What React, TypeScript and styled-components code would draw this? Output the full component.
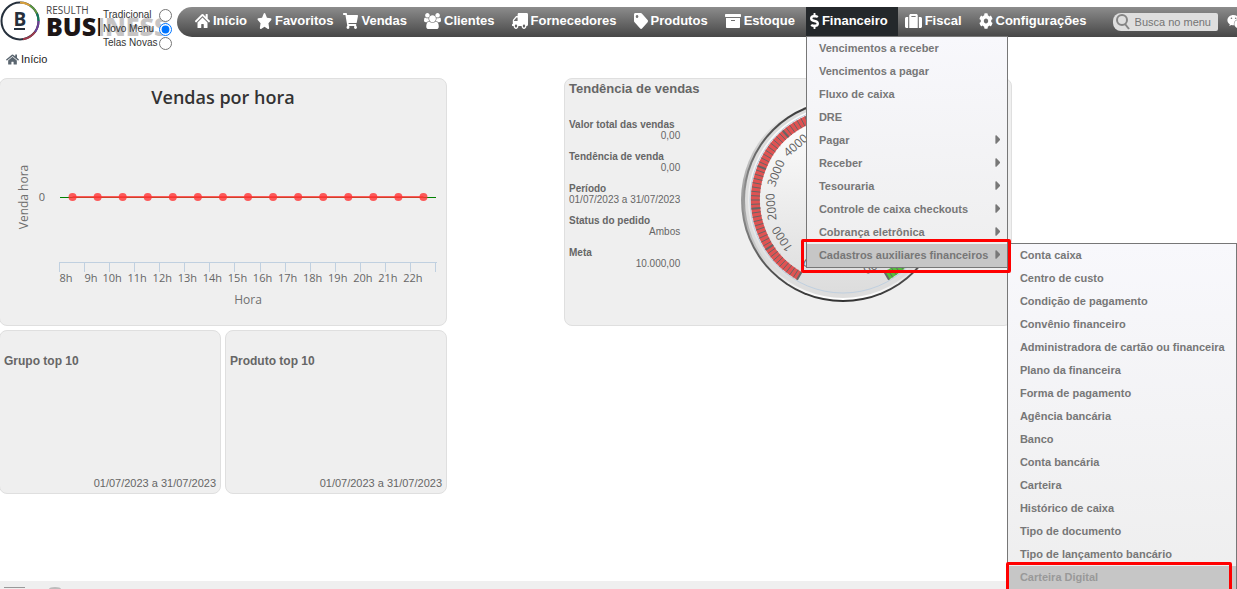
import React from 'react';
import styled, { createGlobalStyle, css } from 'styled-components';
import {
  FaHome, FaStar, FaShoppingCart, FaTruck, FaTag, FaArchive,
  FaDollarSign, FaSuitcase, FaCog, FaWeixin, FaCaretRight,
} from 'react-icons/fa';

const GlobalStyle = createGlobalStyle`
  * { box-sizing: border-box; }
  html, body, #root { height: 100%; }
  body {
    margin: 0;
    overflow: hidden;
    background: #fff;
    color: #666;
    font: 11px/16px "Liberation Sans", Arial, sans-serif;
  }
  a { color: inherit; text-decoration: none; }
  ul { list-style: none; margin: 0; padding: 0; }
  h1, h2, p, dl, dd { margin: 0; }
  svg { display: block; }
`;

const Page = styled.div`
  height: 100%;
  display: flex;
  flex-direction: column;
`;

const Header = styled.header`
  display: flex;
  height: 50px;
`;

const Brand = styled.div`
  position: relative;
  flex: 0 0 177px;
  display: flex;
  gap: 6px;
`;

const BrandMark = styled.svg`
  width: 40px;
  height: 42px;
  flex: none;
`;

const BrandName = styled.div`
  color: #1d1616;
  padding-top: 4px;
`;

const BrandTop = styled.div`
  font: 400 10px/12px "Open Sans", sans-serif;
  color: #444;
`;

const BrandBottom = styled.div`
  font: 800 25px/20px "Open Sans", sans-serif;
`;

const ModePicker = styled.form`
  position: absolute;
  top: 8px;
  left: 100px;
  right: 5px;
  padding-left: 3px;
  background: rgba(255, 255, 255, 0.75);
`;

const Mode = styled.label`
  display: flex;
  justify-content: space-between;
  align-items: center;
  height: 14px;
  font-size: 10px;
  color: #333;
  white-space: nowrap;
  input { margin: 0; width: 13px; height: 13px; }
`;

const Nav = styled.nav`
  flex: 1;
  min-width: 0;
  display: flex;
  height: 30px;
  margin-top: 7px;
  padding-left: 18px;
  border-radius: 20px 0 0 20px;
  background: linear-gradient(#8c8c8c, #474747);
`;

const NavList = styled.ul`
  display: flex;
`;

const NavItem = styled.li<{ $tight?: boolean; $open?: boolean }>`
  position: relative;
  padding-left: ${p => (p.$tight ? 0 : 7)}px;
  padding-right: 10px;
  ${p => p.$open && css`
    margin-left: 1px;
    padding-left: 4px;
    background: #24282b;
  `}
`;

const NavLink = styled.a`
  display: flex;
  align-items: center;
  gap: 3px;
  height: 28px;
  color: #fff;
  font-size: 13px;
  font-weight: bold;
  white-space: nowrap;
`;

const NavIcon = styled.span<{ $width: number; $flip?: boolean }>`
  display: flex;
  justify-content: center;
  width: ${p => p.$width}px;
  svg { width: 100%; height: 16px; flex: none; transform: ${p => (p.$flip ? 'scaleX(-1)' : 'none')}; }
`;

const Search = styled.label`
  display: flex;
  align-items: center;
  gap: 5px;
  width: 105px;
  height: 18px;
  margin: 6px 9px 0 16px;
  padding-left: 2px;
  border-radius: 8px 2px 2px 8px;
  background: #dedede;
  flex: none;
  svg { flex: none; }
  input {
    width: 80px;
    padding: 0;
    border: 0;
    background: none;
    font: 11px "Liberation Sans", Arial, sans-serif;
    outline: 0;
  }
  input::placeholder { color: #757575; opacity: 1; }
`;

const ChatLink = styled.a`
  flex: 1;
  min-width: 0;
  overflow: hidden;
  padding-top: 6px;
  color: #fff;
`;

const Menu = styled.ul<{ $sub?: boolean }>`
  position: absolute;
  z-index: 2;
  top: ${p => (p.$sub ? -1 : 29)}px;
  left: ${p => (p.$sub ? '100%' : '0')};
  width: ${p => (p.$sub ? 230 : 202)}px;
  border: 1px solid #777;
  background: linear-gradient(#f8f8fc, #eee);
`;

const MenuItem = styled.li<{ $active?: boolean; $muted?: boolean }>`
  position: relative;
  color: ${p => (p.$muted ? '#999' : '#777')};
  background: ${p => (p.$active ? '#c6c6c6' : 'none')};
`;

const MenuLink = styled.a`
  display: flex;
  align-items: center;
  justify-content: space-between;
  height: 23px;
  padding: 0 7px 2px 12px;
  font-size: 11px;
  font-weight: bold;
  white-space: nowrap;
  svg { width: 5px; height: 15px; flex: none; }
`;

const Marker = styled.div<{ $sub?: boolean }>`
  position: absolute;
  z-index: 3;
  inset: ${p => (p.$sub ? '-4px 4px -8px -2px' : '-5px -4px -6px -6px')};
  border: 3px solid #f00;
  border-radius: 2px;
  pointer-events: none;
`;

const Breadcrumb = styled.nav`
  display: flex;
  height: 28px;
  padding: 1px 0 0 6px;
  color: #222;
  a { display: flex; gap: 2px; height: 16px; align-items: center; }
  svg { color: #5b6670; }
`;

const Main = styled.main`
  flex: 1;
  display: grid;
  grid-template-columns: 448px 448px;
  column-gap: 117px;
  align-content: start;
  margin-left: -1px;
`;

const Column = styled.div`
  display: grid;
  grid-template-columns: 1fr 1fr;
  gap: 4px;
`;

const Card = styled.section<{ $wide?: boolean }>`
  border: 1px solid #dfdfdf;
  border-radius: 8px;
  background: #efefef;
  min-height: ${p => (p.$wide ? 248 : 164)}px;
  ${p => p.$wide && css`grid-column: 1 / -1;`}
`;

const TopCard = styled(Card)`
  display: flex;
  flex-direction: column;
  justify-content: space-between;
  padding: 22px 4px 2px;
`;

const TopTitle = styled.h2`
  font-size: 12px;
  line-height: 16px;
`;

const TopPeriod = styled.p`
  text-align: right;
`;

const TrendCard = styled(Card)`
  display: flex;
`;

const TrendFigures = styled.div`
  flex: 0 0 175px;
  padding: 2px 0 0 4px;
`;

const TrendTitle = styled.h2`
  font-size: 13px;
  line-height: 16px;
  white-space: nowrap;
  margin-bottom: 22px;
`;

const FigureList = styled.dl`
  width: 107px;
  display: grid;
  gap: 10px;
  font-size: 10px;
  line-height: 11px;
  white-space: nowrap;
  dt { font-weight: bold; }
  dd { display: flex; justify-content: flex-end; }
`;

const Footer = styled.footer`
  height: 8px;
  flex: none;
  display: flex;
  align-items: flex-end;
  background: #efefef;
`;

function UsersIcon(props: React.SVGProps<SVGSVGElement>) {
  return (
    <svg viewBox="0 0 1920 1792" fill="currentColor" {...props}>
      <path d="M593 896q-162 5-265 128h-134q-82 0-138-40.500t-56-118.500q0-353 124-353 6 0 43.500 21t97.500 42.500 119 21.500q67 0 133-23-5 37-5 66 0 139 81 256zm1071 637q0 120-73 189.500t-194 69.500h-874q-121 0-194-69.500t-73-189.500q0-53 3.500-103.500t14-109 26.500-108.500 43-97.500 62-81 85.500-53.500 111.500-20q10 0 43 21.500t73 48 107 48 135 21.500 135-21.500 107-48 73-48 43-21.500q61 0 111.500 20t85.500 53.500 62 81 43 97.500 26.500 108.500 14 109 3.500 103.500zm-1024-1277q0 106-75 181t-181 75-181-75-75-181 75-181 181-75 181 75 75 181zm704 384q0 159-112.500 271.500t-271.500 112.500-271.500-112.500-112.500-271.500 112.500-271.500 271.500-112.500 271.500 112.500 112.500 271.500zm576 225q0 78-56 118.500t-138 40.500h-134q-103-123-265-128 81-117 81-256 0-29-5-66 66 23 133 23 59 0 119-21.500t97.500-42.500 43.500-21q124 0 124 353zm-128-609q0 106-75 181t-181 75-181-75-75-181 75-181 181-75 181 75 75 181z" />
    </svg>
  );
}

interface NavEntry {
  label: string;
  icon: React.ComponentType<{ preserveAspectRatio?: string }>;
  width: number;
  tight?: boolean;
  flip?: boolean;
}

const navEntries: NavEntry[] = [
  { label: 'Início', icon: FaHome, width: 15, tight: true },
  { label: 'Favoritos', icon: FaStar, width: 15, tight: true },
  { label: 'Vendas', icon: FaShoppingCart, width: 15, tight: true },
  { label: 'Clientes', icon: UsersIcon, width: 17 },
  { label: 'Fornecedores', icon: FaTruck, width: 16, flip: true },
  { label: 'Produtos', icon: FaTag, width: 14 },
  { label: 'Estoque', icon: FaArchive, width: 16 },
  { label: 'Financeiro', icon: FaDollarSign, width: 9 },
  { label: 'Fiscal', icon: FaSuitcase, width: 17 },
  { label: 'Configurações', icon: FaCog, width: 14 },
];

const financeMenu = [
  { label: 'Vencimentos a receber' },
  { label: 'Vencimentos a pagar' },
  { label: 'Fluxo de caixa' },
  { label: 'DRE' },
  { label: 'Pagar', nested: true },
  { label: 'Receber', nested: true },
  { label: 'Tesouraria', nested: true },
  { label: 'Controle de caixa checkouts', nested: true },
  { label: 'Cobrança eletrônica', nested: true },
  { label: 'Cadastros auxiliares financeiros', nested: true, open: true },
];

const auxiliaryMenu = [
  'Conta caixa', 'Centro de custo', 'Condição de pagamento', 'Convênio financeiro',
  'Administradora de cartão ou financeira', 'Plano da financeira', 'Forma de pagamento',
  'Agência bancária', 'Banco', 'Conta bancária', 'Carteira', 'Histórico de caixa',
  'Tipo de documento', 'Tipo de lançamento bancário', 'Carteira Digital',
];

const figures = [
  ['Valor total das vendas', '0,00'],
  ['Tendência de venda', '0,00'],
  ['Período', '01/07/2023 a 31/07/2023'],
  ['Status do pedido', 'Ambos'],
  ['Meta', '10.000,00'],
];

const period = '01/07/2023 a 31/07/2023';

function AuxiliaryMenu() {
  return (
    <Menu $sub>
      {auxiliaryMenu.map(label => {
        const last = label === 'Carteira Digital';
        return (
          <MenuItem key={label} $active={last} $muted={last}>
            <MenuLink href="#">{label}</MenuLink>
            {last && <Marker $sub />}
          </MenuItem>
        );
      })}
    </Menu>
  );
}

function FinanceMenu() {
  return (
    <Menu>
      {financeMenu.map(item => (
        <MenuItem key={item.label} $active={item.open}>
          <MenuLink href="#">
            {item.label}
            {item.nested && <FaCaretRight viewBox="0 0 144 512" />}
          </MenuLink>
          {item.open && <AuxiliaryMenu />}
          {item.open && <Marker />}
        </MenuItem>
      ))}
    </Menu>
  );
}

function Logo() {
  return (
    <BrandMark viewBox="0 0 40 42" aria-hidden="true">
      <g fill="none" strokeWidth="2">
        <circle cx="20" cy="21" r="18.5" stroke="#26303c" />
        <path d="M20 2.5a18.5 18.5 0 0 1 10 3" stroke="#d9a13b" />
        <path d="M30 5.5a18.5 18.5 0 0 1 7 8" stroke="#5f9d3f" />
        <path d="M37 13.5a18.5 18.5 0 0 1 1.5 7.5" stroke="#127a5c" />
        <path d="M38.5 21a18.5 18.5 0 0 1-3.5 11" stroke="#6b3f96" />
        <path d="M35 32a18.5 18.5 0 0 1-12 7.3" stroke="#a03a4c" />
      </g>
      <text x="20" y="26" textAnchor="middle" fontFamily="Open Sans" fontWeight="700" fontSize="19" fill="#26303c">B</text>
      <rect x="14" y="28" width="11" height="2" fill="#26303c" />
    </BrandMark>
  );
}

const hours = Array.from({ length: 15 }, (_, i) => i + 8);
const chartFont = '"Open Sans", sans-serif';

function HourlyChart() {
  const left = 60;
  const right = 436;
  const step = (right - left) / hours.length;
  return (
    <svg width="446" height="246" viewBox="0 0 446 246" role="img" aria-label="Vendas por hora" fontFamily={chartFont}>
      <text x="223" y="25" textAnchor="middle" fontSize="18" fontWeight="600" fill="#333">Vendas por hora</text>
      <text x="28" y="118" textAnchor="middle" fontSize="12" fill="#707070" transform="rotate(-90 28 118)">Venda hora</text>
      <text x="45" y="122" textAnchor="end" fontSize="11" fill="#666">0</text>
      <path d={`M${left} 118.5H${right}`} stroke="#008000" />
      <path d={`M${left + step / 2} 118H${right - step / 2}`} stroke="#f33" strokeOpacity=".8" strokeWidth="2" />
      <path
        d={`M${left - 1} 183.5H${right + 1}` + Array.from({ length: 16 }, (_, i) => `M${Math.round(left + i * step) - 0.5} 183v10`).join('')}
        stroke="#c0d0e0"
        fill="none"
      />
      {hours.map((hour, i) => (
        <g key={hour}>
          <circle cx={left + step * (i + 0.5)} cy="118" r="4" fill="#f33" fillOpacity=".8" />
          <text x={left + step * i + (i < 2 ? 6 : 2)} y="203" textAnchor="middle" fontSize="11" fill="#666">{hour}h</text>
        </g>
      ))}
      <text x="248" y="225" textAnchor="middle" fontSize="12" fill="#707070">Hora</text>
    </svg>
  );
}

const polar = (deg: number, r: number) => {
  const a = (deg * Math.PI) / 180;
  return `${(Math.sin(a) * r).toFixed(2)} ${(-Math.cos(a) * r).toFixed(2)}`;
};

const band = (from: number, to: number) =>
  `M${polar(from, 87.5)}A87.5 87.5 0 ${to - from > 180 ? 1 : 0} 1 ${polar(to, 87.5)}`;

function Gauge() {
  const perThousand = 300 / 11;
  const angle = (thousands: number) => -150 + thousands * perThousand;
  const ticks = Array.from({ length: 111 }, (_, i) => i);
  return (
    <svg width="206" height="246" viewBox="-103 -121 206 246" role="img" aria-label="Tendência de vendas" fontFamily={chartFont}>
      <defs>
        <linearGradient id="rimOuter" x1="0" y1="0" x2="0" y2="1">
          <stop offset="0" stopColor="#fff" />
          <stop offset="1" stopColor="#333" />
        </linearGradient>
        <linearGradient id="rimInner" x1="0" y1="0" x2="0" y2="1">
          <stop offset="0" stopColor="#333" />
          <stop offset="1" stopColor="#fff" />
        </linearGradient>
        <linearGradient id="face" x1="0" y1="0" x2="0" y2="1">
          <stop offset="0" stopColor="#fff" />
          <stop offset="1" stopColor="#dcdcdc" />
        </linearGradient>
      </defs>
      <circle r="102" fill="url(#rimOuter)" />
      <circle r="100" fill="url(#rimInner)" />
      <circle r="98" fill="#ddd" />
      <circle r="95" fill="url(#face)" />
      <circle r="93" fill="none" stroke="#c0d0e0" />
      <g fill="none" strokeWidth="9">
        <path d={band(angle(0), angle(6))} stroke="#df5353" />
        <path d={band(angle(6), angle(9))} stroke="#dddf0d" />
        <path d={band(angle(9), angle(11))} stroke="#55bf3b" />
      </g>
      {ticks.map(i => (
        <path
          key={i}
          d={`M${polar(angle(i / 10), 92)}L${polar(angle(i / 10), 83)}`}
          stroke="#666"
          strokeWidth={i % 10 === 0 ? 2 : 1}
        />
      ))}
      {Array.from({ length: 12 }, (_, i) => (
        <text key={i} y="-68" textAnchor="middle" fontSize="12" fill="#606060" transform={`rotate(${angle(i)})`}>
          {i * 1000}
        </text>
      ))}
    </svg>
  );
}

export default function App() {
  return (
    <Page>
      <GlobalStyle />
      <Header>
        <Brand>
          <Logo />
          <BrandName>
            <BrandTop>RESULTH</BrandTop>
            <BrandBottom>BUSINESS</BrandBottom>
          </BrandName>
          <ModePicker>
            <Mode>Tradicional<input type="radio" name="mode" /></Mode>
            <Mode>Novo Menu<input type="radio" name="mode" defaultChecked /></Mode>
            <Mode>Telas Novas<input type="radio" name="mode" /></Mode>
          </ModePicker>
        </Brand>
        <Nav>
          <NavList>
            {navEntries.map(({ label, icon: Icon, width, tight, flip }) => {
              const open = label === 'Financeiro';
              return (
                <NavItem key={label} $tight={tight} $open={open}>
                  <NavLink href="#">
                    <NavIcon $width={width} $flip={flip}><Icon preserveAspectRatio="none" /></NavIcon>
                    {label}
                  </NavLink>
                  {open && <FinanceMenu />}
                </NavItem>
              );
            })}
          </NavList>
          <Search>
            <svg width="15" height="16" viewBox="0 0 15 16" fill="none" stroke="#858585" strokeWidth="2">
              <circle cx="7" cy="6" r="5" />
              <path d="M10 10l4 5" />
            </svg>
            <input type="text" placeholder="Busca no menu" aria-label="Busca no menu" />
          </Search>
          <ChatLink href="#" aria-label="Chat"><FaWeixin size={18} /></ChatLink>
        </Nav>
      </Header>
      <Breadcrumb>
        <a href="#"><FaHome size={13} />Início</a>
      </Breadcrumb>
      <Main>
        <Column>
          <Card $wide><HourlyChart /></Card>
          <TopCard>
            <TopTitle>Grupo top 10</TopTitle>
            <TopPeriod>{period}</TopPeriod>
          </TopCard>
          <TopCard>
            <TopTitle>Produto top 10</TopTitle>
            <TopPeriod>{period}</TopPeriod>
          </TopCard>
        </Column>
        <div>
          <TrendCard $wide>
            <TrendFigures>
              <TrendTitle>Tendência de vendas</TrendTitle>
              <FigureList>
                {figures.map(([name, value]) => (
                  <div key={name}>
                    <dt>{name}</dt>
                    <dd>{value}</dd>
                  </div>
                ))}
              </FigureList>
            </TrendFigures>
            <Gauge />
          </TrendCard>
        </div>
      </Main>
      <Footer>
        <svg width="70" height="2" viewBox="0 0 70 2" aria-hidden="true">
          <path d="M4 .5h21" stroke="#999" />
          <ellipse cx="55" cy="2" rx="6" ry="2" fill="#bbb" />
        </svg>
      </Footer>
    </Page>
  );
}
